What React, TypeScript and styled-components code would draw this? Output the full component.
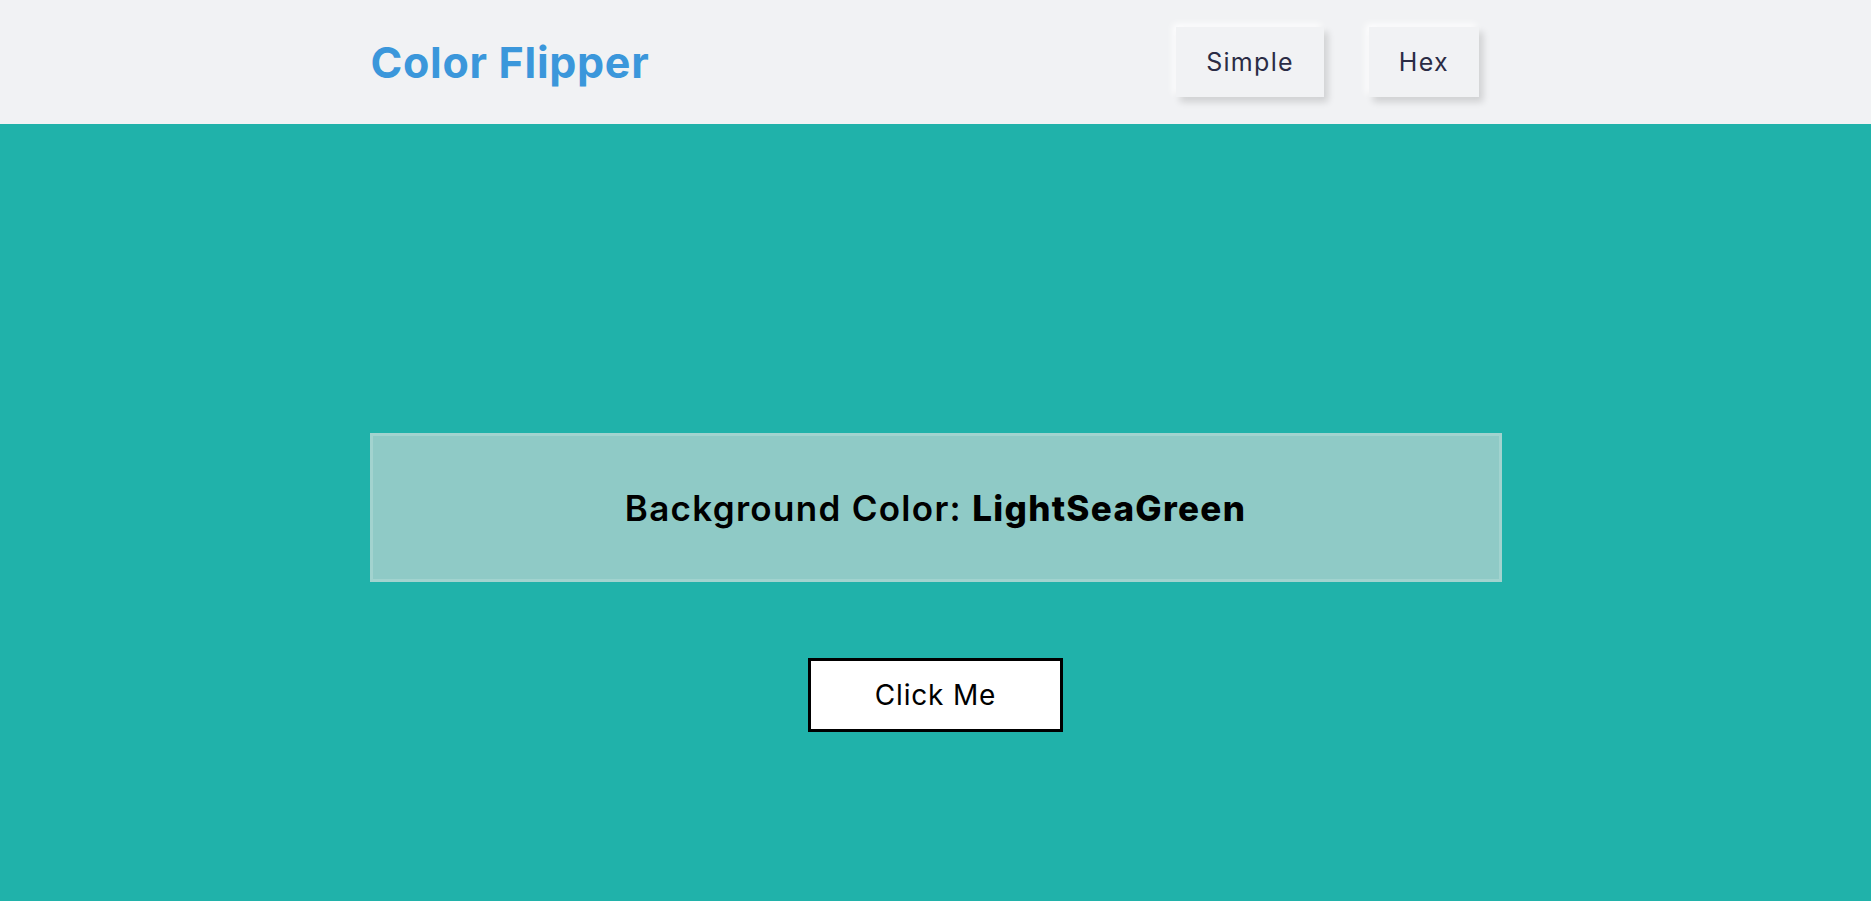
import React, { useState } from 'react';
import styled, { createGlobalStyle } from 'styled-components';

const GlobalStyle = createGlobalStyle`
  * {
    box-sizing: border-box;
  }
  body {
    margin: 0;
    font-family: Inter, 'Open Sans', sans-serif;
    background: #20b2aa;
  }
`;

const Navbar = styled.nav`
  background: #f1f2f4;
  height: 124px;
`;

const NavCenter = styled.div`
  width: 1132px;
  margin: 0 auto;
  height: 100%;
  display: flex;
  align-items: center;
  justify-content: space-between;
`;

const Logo = styled.h4`
  margin: 0;
  font-size: 43px;
  font-weight: 700;
  letter-spacing: 0.7px;
  color: #3b97db;
  padding-left: 1px;
`;

const NavLinks = styled.ul`
  display: flex;
  list-style: none;
  margin: 0;
  padding: 0;
`;

const NavLink = styled.li`
  margin: 0 22.5px;
  height: 70px;
  padding: 0 30px;
  display: flex;
  align-items: center;
  background: #f1f2f4;
  color: #2b2c45;
  font-size: 25px;
  letter-spacing: 1.3px;
  box-shadow: 4px 5px 7px rgba(0, 0, 0, 0.14), -3px -3px 7px rgba(255, 255, 255, 0.95);
  cursor: pointer;
`;

const Main = styled.main`
  display: flex;
  flex-direction: column;
  align-items: center;
  padding-top: 309px;
  gap: 76px;
`;

const ColorBox = styled.div`
  width: 1132px;
  height: 149px;
  display: flex;
  align-items: center;
  justify-content: center;
  background: #8fcac6;
  border: 3px solid #a2d3cf;
`;

const ColorText = styled.h2`
  margin: 0;
  font-size: 35px;
  font-weight: 600;
  color: #000;
  letter-spacing: 1.3px;
`;

const ColorName = styled.span`
  font-weight: 800;
`;

const FlipButton = styled.button`
  width: 255px;
  height: 74px;
  background: #fff;
  border: 3px solid #000;
  font-family: inherit;
  font-size: 28px;
  letter-spacing: 0.8px;
  color: #000;
  cursor: pointer;
`;

const colors = ['LightSeaGreen', 'Tomato', 'SteelBlue', 'Goldenrod'];

const App = (): JSX.Element => {
  const [index, setIndex] = useState(0);
  const color = colors[index];

  return (
    <>
      <GlobalStyle />
      <Navbar>
        <NavCenter>
          <Logo>Color Flipper</Logo>
          <NavLinks>
            <NavLink>Simple</NavLink>
            <NavLink>Hex</NavLink>
          </NavLinks>
        </NavCenter>
      </Navbar>
      <Main style={{ background: color }}>
        <ColorBox>
          <ColorText>
            Background Color: <ColorName>{color}</ColorName>
          </ColorText>
        </ColorBox>
        <FlipButton onClick={() => setIndex((index + 1) % colors.length)}>Click Me</FlipButton>
      </Main>
    </>
  );
};

export default App;
